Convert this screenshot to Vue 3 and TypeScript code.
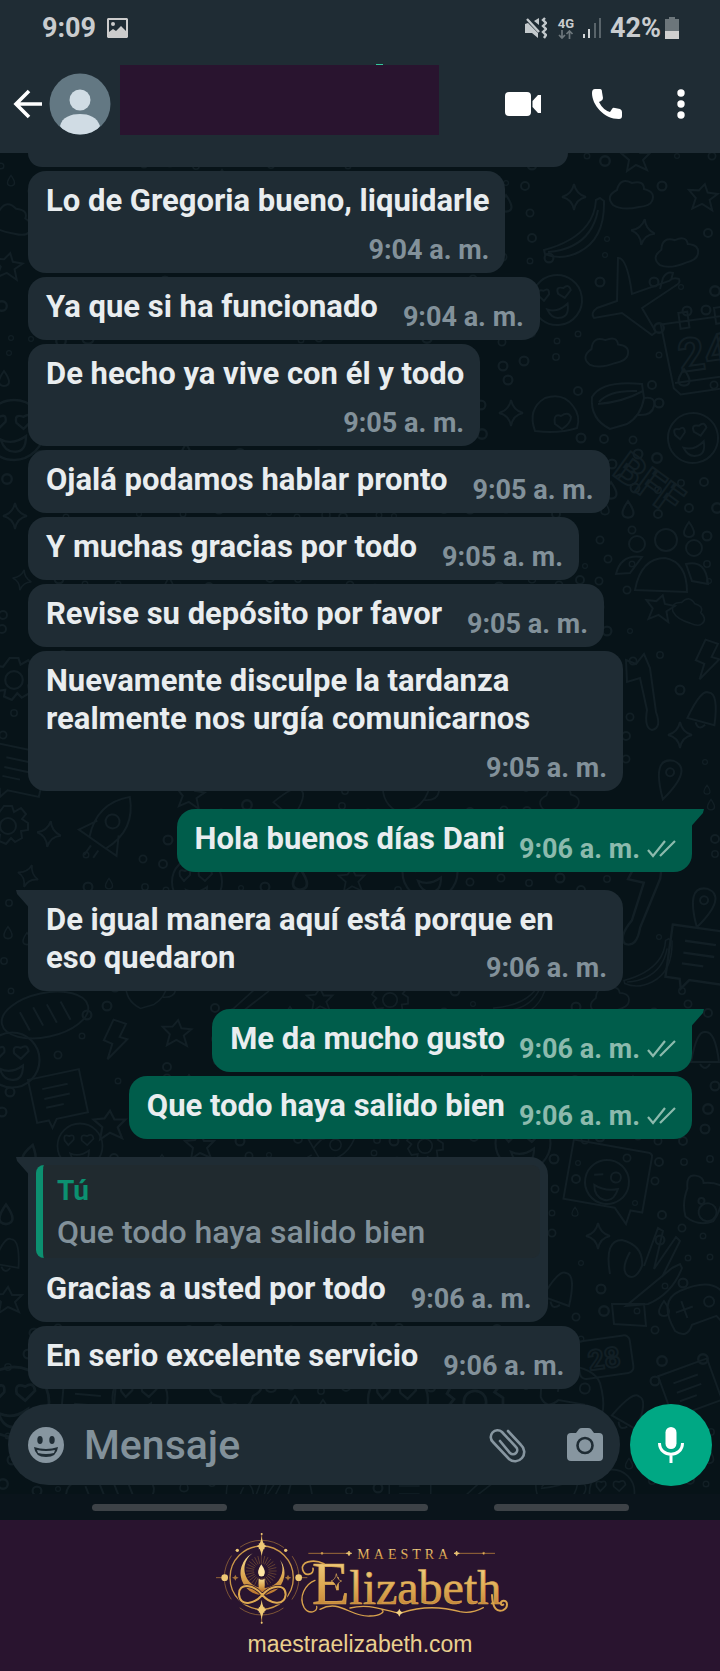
<script setup lang="ts">
import { ref } from 'vue'

type Mode = 'inline' | 'stacked' | 'wrapped'

interface Message {
  id: number
  text: string
  time: string
  mode: Mode
  out?: boolean
  first?: boolean
  quote?: { author: string; text: string }
}

const messages: Message[] = [
  { id: 1, text: 'Lo de Gregoria bueno, liquidarle', time: '9:04 a. m.', mode: 'stacked' },
  { id: 2, text: 'Ya que si ha funcionado', time: '9:04 a. m.', mode: 'inline' },
  { id: 3, text: 'De hecho ya vive con él y todo', time: '9:05 a. m.', mode: 'stacked' },
  { id: 4, text: 'Ojalá podamos hablar pronto', time: '9:05 a. m.', mode: 'inline' },
  { id: 5, text: 'Y muchas gracias por todo', time: '9:05 a. m.', mode: 'inline' },
  { id: 6, text: 'Revise su depósito por favor', time: '9:05 a. m.', mode: 'inline' },
  { id: 7, text: 'Nuevamente disculpe la tardanza realmente nos urgía comunicarnos', time: '9:05 a. m.', mode: 'stacked' },
  { id: 8, text: 'Hola buenos días Dani', time: '9:06 a. m.', mode: 'inline', out: true, first: true },
  { id: 9, text: 'De igual manera aquí está porque en eso quedaron', time: '9:06 a. m.', mode: 'wrapped', first: true },
  { id: 10, text: 'Me da mucho gusto', time: '9:06 a. m.', mode: 'inline', out: true, first: true },
  { id: 11, text: 'Que todo haya salido bien', time: '9:06 a. m.', mode: 'inline', out: true },
  {
    id: 12,
    text: 'Gracias a usted por todo',
    time: '9:06 a. m.',
    mode: 'inline',
    first: true,
    quote: { author: 'Tú', text: 'Que todo haya salido bien' },
  },
  { id: 13, text: 'En serio excelente servicio', time: '9:06 a. m.', mode: 'inline' },
]

const draft = ref('')

type Doodle = [shape: string, x: number, y: number, scale: number, turn: number]

const doodles: Doodle[] = [
  ['cloud', 632, 195, 1, 0], ['cloud', 677, 252, 1, -10], ['cloud', 607, 352, 1, -8], ['cloud', 12, 220, 1, 20],
  ['banana', 574, 232, 1, 0], ['plane', 628, 300, 1, 0], ['smile', 557, 300, 1, -8], ['calendar', 702, 352, 1, -8],
  ['cup', 622, 406, 1, 0], ['smile', 693, 438, 1, -10], ['cookie', 557, 414, 1, 0], ['people', 666, 560, 1, 0],
  ['spark', 574, 197, 1, 0], ['spark', 643, 232, 1, 8], ['spark', 511, 413, 1, 0], ['star', 703, 197, 1, 8],
  ['star', 636, 158, 1, 0], ['star', 660, 608, 1, 12], ['spark', 15, 516, 1, 0], ['spark', 22, 580, 0.8, 12],
  ['star', 8, 266, 1, 10], ['smile', 14, 430, 1.2, 0], ['gear', 14, 680, 1.1, 0], ['note', 18, 770, 1, 12],
  ['bone', 648, 690, 1, 0], ['spark', 680, 735, 1, 0], ['bolt', 706, 660, 1, 10], ['pin', 668, 780, 1, 15],
  ['bell', 704, 710, 1, 15], ['cloud', 690, 612, 0.8, 30], ['gear', 8, 826, 1, 0], ['spark', 49, 834, 1, 8],
  ['rocket', 108, 828, 1, 35], ['star', 190, 795, 1, 10], ['bell', 290, 802, 0.9, 40], ['cup', 410, 792, 0.9, 0],
  ['cloud', 560, 800, 0.9, 0], ['spark', 28, 876, 0.9, 20], ['smile', 197, 882, 1, 0], ['drop', 300, 880, 1.4, 0],
  ['star', 352, 880, 0.9, 0], ['smile', 430, 872, 1.1, 0], ['pin', 702, 908, 1, 15], ['bone', 645, 900, 1.2, 30],
  ['banana', 648, 966, 0.8, 0], ['note', 700, 955, 1.2, 8], ['bread', 45, 1015, 1, -12], ['bolt', 114, 1040, 1, 10],
  ['star', 177, 1033, 1, 5], ['note', 58, 1096, 1, -12], ['smile', 12, 1060, 1.1, 0], ['drop', 30, 1155, 1.3, 15],
  ['star', 110, 1125, 1.1, 0], ['cup', 150, 990, 0.8, 0], ['bone', 250, 1000, 0.9, 60], ['star', 320, 1000, 0.9, 0],
  ['gear', 390, 1000, 0.9, 0], ['banana', 520, 998, 0.8, 10], ['cloud', 610, 1000, 0.9, -10], ['bell', 705, 1050, 1, 0],
  ['chat', 607, 1182, 1, 10], ['bear', 707, 1204, 1, 10], ['spark', 598, 1236, 1, 0], ['hand', 638, 1268, 1, 0],
  ['pad', 698, 1312, 1, -20], ['clock', 606, 1358, 1, -8], ['bell', 560, 1290, 1, 20], ['note', 690, 1388, 1, -20],
  ['star', 8, 1300, 1, 0], ['bell', 8, 1255, 0.9, 10], ['drop', 6, 1215, 1.3, 0], ['smile', 80, 1146, 0.9, 0],
  ['star', 200, 1146, 1, 0], ['rocket', 330, 1148, 0.8, 60], ['gear', 425, 1146, 0.9, 0], ['smile', 523, 1143, 1.1, 0],
  ['smile', 14, 1402, 1.4, 0], ['note', 88, 1405, 1, 5], ['smile', 140, 1398, 1.1, 0], ['cloud', 235, 1390, 1.2, 180],
  ['smile', 398, 1400, 1.2, 0], ['gear', 475, 1402, 1.4, 0], ['pad', 570, 1392, 1, 10], ['bell', 630, 1412, 1, 30],
  ['bread', 110, 1492, 1, -5], ['hand', 250, 1500, 0.8, 0], ['bell', 300, 1488, 0.9, 0], ['note', 410, 1494, 0.8, 0],
  ['bone', 480, 1488, 0.8, 60], ['smile', 612, 1492, 0.9, 0], ['cup', 560, 1490, 0.8, 0],
]

/* Scatter small rings, drops and dots in the spaces that the larger doodles leave free. */
function scatter(): Doodle[] {
  const out: Doodle[] = []
  let seed = 7
  const next = () => {
    seed = (seed * 16807) % 2147483647
    return seed / 2147483647
  }
  for (let y = 160; y < 1490; y += 25) {
    for (let x = 8; x < 720; x += 26) {
      const px = Math.round(x + next() * 14 - 7)
      const py = Math.round(y + next() * 14 - 7)
      const pick = next()
      const crowded = doodles.some((d) => Math.hypot(d[1] - px, d[2] - py) < 31)
      if (crowded) continue
      out.push([pick < 0.85 ? 'ring' : 'drop', px, py, 0.6 + Math.round(next() * 6) / 10, 0])
    }
  }
  return out
}

const wallpaper: Doodle[] = [...scatter(), ...doodles]
const rays = Array.from({ length: 28 }, (_, i) => (i * 360) / 28)
</script>

<template>
  <div class="page">
    <header class="top">
      <div class="status">
        <span class="clock">9:09</span>
        <svg class="pic" viewBox="0 0 21 20" aria-hidden="true">
          <path fill-rule="evenodd" d="M1 0h19l1 1v18l-1 1H1l-1-1V1zM2 2v12l4-3 3 2 5-5 5 5V2zM6 4a2 2 0 1 1 0 4a2 2 0 0 1 0-4z" />
        </svg>
        <span class="push"></span>
        <svg class="mute" viewBox="0 0 22 22" aria-hidden="true">
          <path d="M0 7l3-1L13 16v5l-6-5H0z" fill="#c3c9cc" />
          <path d="M14 1v7L9 4z" fill="#c3c9cc" />
          <path d="M2 2l12 13" stroke="#c3c9cc" stroke-width="2.400" />
          <path d="M20 1l-2 2 3 3-3 3 3 3-3 3 3 3-2 3" fill="none" stroke="#c3c9cc" stroke-width="2.400" />
        </svg>
        <span class="net">
          <span>4G</span>
          <svg viewBox="0 0 16 9" aria-hidden="true">
            <path d="M4 0v8M1 5l3 3 3-3M11.500 9V1M8.500 4l3-3 3 3" fill="none" stroke="#6d777c" stroke-width="1.700" />
          </svg>
        </span>
        <svg class="signal" viewBox="0 0 19 20" aria-hidden="true">
          <path d="M0 16h2v4H0zM5 11h2v9H5z" fill="#d3d7d9" />
          <path d="M11 5h2v15h-2zM16 0h2v20h-2z" fill="#59646a" />
        </svg>
        <span class="level">42%</span>
        <svg class="battery" viewBox="0 0 14 22" aria-hidden="true">
          <path d="M4 0h6v2h4v12H0V2h4z" fill="#6c767b" />
          <path d="M0 14h14v8H0z" fill="#d0d0d0" />
        </svg>
      </div>
      <div class="bar">
        <button class="icon back" type="button" aria-label="Atrás">
          <svg viewBox="0 0 28 28"><path d="M15 1L2 14l13 13M2 14h26" fill="none" stroke="#fff" stroke-width="3.600" /></svg>
        </button>
        <svg class="avatar" viewBox="0 0 62 62" role="img" aria-label="Contacto">
          <defs><clipPath id="face"><circle cx="31" cy="31" r="30.500" /></clipPath></defs>
          <circle cx="31" cy="31" r="30.500" fill="#637883" />
          <g clip-path="url(#face)" fill="#d0dce4">
            <circle cx="31" cy="27" r="10.500" />
            <path d="M11 53c2-9 11-12 20-12s17 3 20 12c-4 7-12 10-20 10s-16-3-20-10z" />
          </g>
        </svg>
        <div class="name"></div>
        <div class="actions">
          <button class="icon video" type="button" aria-label="Videollamada">
            <svg viewBox="0 0 36 24"><rect width="26" height="24" rx="4" fill="#fff" /><path d="M27.500 9L33 3h3v18h-3l-5.500-6z" fill="#fff" /></svg>
          </button>
          <button class="icon phone" type="button" aria-label="Llamar">
            <svg viewBox="0 0 30 30"><path d="M3 0h5q2 0 2 3l1 6q0 2-2 3l-2 1q4 8 11 10l2-3q1-2 3-1l5 1q2 1 2 3v4q0 3-3 3C12 30 0 16 0 4q0-4 3-4z" fill="#fff" /></svg>
          </button>
          <button class="icon more" type="button" aria-label="Más opciones">
            <svg viewBox="0 0 8 30"><circle cx="4" cy="4" r="3.700" /><circle cx="4" cy="15" r="3.700" /><circle cx="4" cy="26" r="3.700" /></svg>
          </button>
        </div>
      </div>
    </header>

    <main class="chat">
      <svg class="wallpaper" viewBox="0 153 720 1341" preserveAspectRatio="xMidYMin slice" aria-hidden="true">
        <defs>
          <g id="ring"><circle r="4" /></g>
          <g id="drop"><path d="M0-8q10 14 0 15q-10-1 0-15z" /></g>
          <g id="spark"><path d="M0-13q2 10 12 13q-10 2-12 13q-2-11-12-13q10-3 12-13z" /></g>
          <g id="star"><path d="M0-13l4 8 10 0-7 7 4 10-11-5-9 6 2-11-8-7 10-1z" /></g>
          <g id="cloud"><path d="M-19 10q-8-9 4-15q3-13 15-7q12-3 12 6q12 3 8 12q-2 5-13 6q-17 4-26-2z" /></g>
          <g id="banana"><path d="M26-34l4 3q1 38-25 51q-18 9-34 2l-1-4q30-8 43-25q8-10 9-25zM24-22q-5 26-26 36-10 5-24 6" /></g>
          <g id="plane"><path d="M-10-42q9-1 14 36l37-13q4-4 10-2q2 4-4 7L14 8l14 24-4 3L-6 13l-28 5q-4-5 3-10l20-7zM32-11l3-11q4-7 10-5l-2 7" /></g>
          <g id="smile"><circle r="25" /><path d="M-17-6q-2-8 5-5q6-3 5 4l-6 6zM2-6q-2-8 6-5q6-4 7 3l-7 7zM-11 8q10 5 21-3q0 14-10 13q-8 0-11-10z" /></g>
          <g id="calendar"><path d="M-37-33h80v72h-70l-6-7zM-31 27h74M-18-42h9v16h-9zM18-42h9v16h-9z" /><text x="-24" y="17" font-size="46">24</text></g>
          <g id="cup"><path d="M-30-9q10-17 50-13l2 14q-3 18-17 26l-17 5q-20-10-18-32zM-24-2q25-2 45-13M-23-4q10-12 38-11M22-8q12-2 10 8t-16 9" /></g>
          <g id="cookie"><path d="M-22 17q-8-22 10-33q18-6 28 8q8 10 4 22q-18 6-42 3zM-2 10q-2-11 6-8q7-5 10 1q0 6-9 12z" /></g>
          <g id="people"><circle cy="-20" r="11" /><circle cx="-29" cy="-16" r="8" /><circle cx="28" cy="-12" r="8" /><path d="M-31 30q6-32 30-32q22 4 22 34zM-50 14q5-20 26-17l-12 16zM20 4q20-5 22 20l-16-3z" /></g>
          <g id="gear"><circle r="8" /><path d="M-4-20h8l2 6 7-4 5 6-4 5 6 4v7l-7 1 1 7-7 4-4-4-5 6-7-3 1-6-7 1-4-7 4-5-5-4 4-7 6 1z" /></g>
          <g id="note"><path d="M-26-22h52v44h-32l-6 8-2-8h-12zM-14-10h26M-14 0h26M-14 9h18" /></g>
          <g id="bone"><path d="M-22-30l10 4 8-10 6 14 6 44q6 16-4 18q-8-2-5-20l-7-32-13 4z" /></g>
          <g id="bolt"><path d="M-4-20l13 2-4 14 8 1-16 23 2-16-9-2z" /></g>
          <g id="pin"><path d="M0 20q-22-38 0-40q22 2 0 40z" /><circle cy="-8" r="4" /></g>
          <g id="bell"><path d="M-14 12q6-32 14-30q10-2 14 30zM-5 14q5 8 10 0" /></g>
          <g id="rocket"><path d="M0-38q24 24 10 56h-20q-14-32 10-56zM-13 0l-10 18 13 0M13 0l10 18-13 0M-4 24v12M5 24v9" /><circle cy="-8" r="7" /></g>
          <g id="bread"><ellipse rx="44" ry="22" /><path d="M-24-8l6 20M-10-10l6 20M4-10l6 20M18-10l6 20" /></g>
          <g id="chat"><path d="M-40-36h76q4 0 4 4v56h-12l-2 14-14-14h-52z" /><circle r="22" /><path d="M-14-5l9-2M3-6a5 5 0 1 0 10 0a5 5 0 1 0-10 0M-12 5q12 5 24 0q-2 14-12 13q-10-1-12-13z" /></g>
          <g id="bear"><path d="M-22-12q-4-14 6-14q8 0 9 6q10-3 20 0q4 20-4 36q-14 8-28 0q-6-12-3-28z" /><circle cx="-6" cy="-2" r="3" /><circle cx="2" cy="8" r="9" /></g>
          <g id="hand"><path d="M-28 6q-6-34 12-34q22 6 20 26q-6 14-14 10q-8-6 2-24M6-2l14-38 5 3-9 38 22-32 4 4-18 36M34 0l8-4 2 4q-10 26-34 36l-22 2zM-26 36l32 0 2 22-32-2z" /></g>
          <g id="pad"><path d="M-28 10q-6-34 18-36q30-2 38 12q14 30 2 40q-8 0-14-16h-26q-10 12-18 0z" /><path d="M-12-16v18M-21-7h18" /><circle cx="14" cy="-6" r="5" /></g>
          <g id="clock"><rect x="-28" y="-20" width="54" height="38" rx="6" /><text x="-18" y="10" font-size="28">28</text></g>
        </defs>
        <g class="ink">
          <use
            v-for="(d, i) in wallpaper"
            :key="i"
            :href="'#' + d[0]"
            :transform="`translate(${d[1]} ${d[2]}) rotate(${d[4]}) scale(${d[3]})`"
          />
          <g transform="translate(611 474) rotate(36)"><text font-size="42">BFF</text></g>
        </g>
      </svg>

      <div class="thread">
        <div class="cut"></div>
        <article
          v-for="m in messages"
          :key="m.id"
          class="bubble"
          :class="[m.mode, { out: m.out, first: m.first, quoted: m.quote }]"
        >
          <blockquote v-if="m.quote" class="quote">
            <span class="author">{{ m.quote.author }}</span>
            <span>{{ m.quote.text }}</span>
          </blockquote>
          <div class="body">
            <p class="text">{{ m.text }}</p>
            <span class="meta">
              <time>{{ m.time }}</time>
              <svg v-if="m.out" class="ticks" viewBox="0 0 29 18" role="img" aria-label="Entregado">
                <path d="M1 10l5 6L18 1M13 16L28 1" fill="none" stroke="currentColor" stroke-width="2.200" />
              </svg>
            </span>
          </div>
        </article>
      </div>

      <form class="composer" @submit.prevent>
        <div class="field">
          <button class="icon emoji" type="button" aria-label="Emojis">
            <svg viewBox="0 0 36 36">
              <circle cx="18" cy="18" r="18" fill="#8796a0" />
              <ellipse cx="12" cy="13" rx="2.700" ry="4" fill="#1f2c34" />
              <ellipse cx="24" cy="13" rx="2.700" ry="4" fill="#1f2c34" />
              <path d="M6 20q12 4 24 0q-1 10-12 10T6 20z" fill="#1f2c34" />
              <path d="M9 23q9 2 18 0l-1 3q-8 2-16 0z" fill="#8796a0" />
            </svg>
          </button>
          <input v-model="draft" type="text" placeholder="Mensaje" aria-label="Mensaje" />
          <button class="icon clip" type="button" aria-label="Adjuntar">
            <svg viewBox="0 0 37 34">
              <path d="M19 3l13 14a9 9 0 0 1-12 14L4 14A6 6 0 0 1 13 4l14 15a4 4 0 0 1-6 6L11 13" fill="none" stroke="#8796a0" stroke-width="2.600" stroke-linecap="round" />
            </svg>
          </button>
          <button class="icon camera" type="button" aria-label="Cámara">
            <svg viewBox="0 0 36 33">
              <path d="M12 1q1-1 3-1h6q2 0 3 1l3 4h5q4 0 4 4v20q0 4-4 4H4q-4 0-4-4V9q0-4 4-4h5z" fill="#8796a0" />
              <circle cx="18" cy="17.500" r="7.500" fill="none" stroke="#1f2c34" stroke-width="2.600" />
            </svg>
          </button>
        </div>
        <button class="mic" type="button" aria-label="Grabar audio">
          <svg viewBox="0 0 26 36">
            <rect x="7.500" width="11" height="22" rx="5.500" fill="#fff" />
            <path d="M1.500 16c0 15 23 15 23 0M13 27v9" fill="none" stroke="#fff" stroke-width="3" />
          </svg>
        </button>
      </form>
    </main>

    <nav class="keys" aria-label="Navegación">
      <button type="button" aria-label="Recientes"></button>
      <button type="button" aria-label="Inicio"></button>
      <button type="button" aria-label="Volver"></button>
    </nav>

    <footer class="brand">
      <svg class="logo" viewBox="30 51 900 282" role="img" aria-label="Maestra Elizabeth">
        <defs>
          <linearGradient id="gold" x1="0" y1="0" x2="0" y2="1">
            <stop offset="0" stop-color="#f6dc92" />
            <stop offset="0.550" stop-color="#dca750" />
            <stop offset="1" stop-color="#b8732c" />
          </linearGradient>
          <path id="glint" d="M0-30Q3-4 15 0Q3 4 0 30Q-3 4-15 0Q-3-4 0-30zM-9-9Q0-4 9-9Q4 0 9 9Q0 4-9 9Q-4 0-9-9z" />
        </defs>
        <g fill="none" stroke="#a8753a">
          <circle cx="185" cy="188" r="112" stroke-width="2" stroke-dasharray="140 36" stroke-dashoffset="70" />
          <circle cx="185" cy="188" r="95" stroke="#cc9849" stroke-width="4" />
          <path d="M48 188h36M286 188h36M185 54v50M185 272v54" stroke-width="2.500" />
        </g>
        <g stroke="#8f6336" stroke-width="1.500">
          <path v-for="r in rays" :key="r" d="M0-22V-46" :transform="`translate(184 168) rotate(${r})`" />
        </g>
        <path d="M158 115A66 66 0 1 0 240 134A57 57 0 1 1 158 115z" fill="url(#gold)" />
        <path d="M184 148q16 23 8 33q-8 7-15 0q-8-10 7-33z" fill="#ffe6a5" />
        <path d="M176 191q9 6 18 0v38h-18z" fill="url(#gold)" />
        <path d="M187 240C160 207 116 202 117 238C120 278 164 266 187 240C211 213 257 202 257 239C253 276 209 266 187 240z" fill="none" stroke="#29142f" stroke-width="11" />
        <path d="M187 240C160 207 116 202 117 238C120 278 164 266 187 240C211 213 257 202 257 239C253 276 209 266 187 240z" fill="none" stroke="#dda951" stroke-width="6" />
        <g fill="#eec875">
          <use href="#glint" x="185" y="94" />
          <use href="#glint" x="185" y="284" />
          <circle cx="74" cy="188" r="10" /><circle cx="296" cy="188" r="10" />
          <circle cx="112" cy="106" r="5" /><circle cx="257" cy="106" r="5" />
          <circle cx="185" cy="57" r="3" /><circle cx="185" cy="323" r="3" />
          <path d="M106 179l3 6 7 3-7 3-3 6-3-6-7-3 7-3zM264 179l3 6 7 3-7 3-3 6-3-6-7-3 7-3z" fill="#a8753a" />
        </g>
        <g stroke="#b27c3b" stroke-width="2.500" fill="#eec875">
          <path d="M325 115h120M770 115h115" />
          <circle cx="366" cy="115" r="3" /><circle cx="851" cy="115" r="3" />
          <path d="M447 108l2 5 6 2-6 2-2 5-2-5-6-2 6-2zM770 108l2 5 6 2-6 2-2 5-2-5-6-2 6-2z" stroke="#eec875" />
        </g>
        <text class="small" x="472" y="131">MAESTRA</text>
        <text class="big" x="336" y="267">E</text>
        <text class="rest" x="448" y="266">lizabeth</text>
        <g fill="none" stroke="#d9a34d" stroke-width="5" stroke-linecap="round">
          <path d="M372 146C338 130 300 142 308 164C315 187 344 178 339 160" />
          <path d="M345 196C316 207 295 246 312 277C326 300 355 291 350 274" stroke-width="4" />
          <path d="M360 283C420 251 450 307 510 303C542 303 556 289 546 285M450 279C505 265 545 284 592 293M606 293C680 268 740 279 780 290Q815 297 850 278" stroke-width="4" />
          <path d="M876 240C878 283 892 291 908 286C926 279 924 256 910 257C898 260 902 273 910 269" stroke-width="6" />
        </g>
        <path d="M409 176q3 19 16 22q-13 4-16 22q-3-18-16-22q13-3 16-22z" fill="#29142f" stroke="#e0ae59" stroke-width="2" />
        <path d="M598 281q2 9 11 12q-9 3-11 12q-2-9-11-12q9-3 11-12z" fill="#f3d486" />
      </svg>
      <a href="#">maestraelizabeth.com</a>
    </footer>
  </div>
</template>

<style>
html,
body {
  background: #29142f;
}
</style>

<style scoped>
.page {
  font-family: Roboto, 'Liberation Sans', sans-serif;
  font-weight: 500;
  color: #e9edef;
}
button {
  margin: 0;
  padding: 0;
  border: 0;
  background: none;
}
.icon {
  display: block;
  flex: none;
}
svg {
  display: block;
  flex: none;
}
.icon svg {
  width: 100%;
  height: 100%;
  overflow: visible;
}
.top {
  background: #1f2c34;
}
.status {
  display: flex;
  align-items: center;
  height: 54px;
  padding: 2px 41px 0 42px;
  box-sizing: border-box;
  color: #c9cccf;
  font-size: 27px;
  font-weight: 700;
  line-height: 52px;
}
.pic {
  width: 21px;
  height: 20px;
  margin-left: 11px;
  fill: #cccccc;
}
.push {
  flex: 1;
}
.mute {
  width: 22px;
  height: 22px;
}
.net {
  margin: 0 9px 0 11px;
  font-size: 13px;
  line-height: 13px;
}
.net svg {
  width: 16px;
  height: 9px;
}
.signal {
  width: 19px;
  height: 20px;
  margin-right: 8px;
}
.battery {
  width: 14px;
  height: 22px;
  margin-left: 4px;
}
.bar {
  display: flex;
  align-items: center;
  height: 99px;
  padding: 0 35px 0 14px;
}
.back {
  width: 28px;
  height: 28px;
}
.avatar {
  width: 62px;
  height: 62px;
  margin: 0 9px 0 7px;
}
.name {
  position: relative;
  flex: 0 1 319px;
  align-self: flex-start;
  height: 70px;
  margin-top: 11px;
  background: #29142f;
}
.name::before {
  content: '';
  position: absolute;
  top: -1px;
  left: 256px;
  width: 7px;
  height: 1px;
  background: #35c79c;
}
.actions {
  display: flex;
  align-items: center;
  margin-left: auto;
}
.video {
  width: 36px;
  height: 24px;
  margin-right: 51px;
}
.phone {
  width: 30px;
  height: 30px;
  margin-right: 55px;
}
.more {
  width: 8px;
  height: 30px;
  fill: #fff;
}
.chat {
  position: relative;
  overflow: hidden;
  background: #071318;
}
.wallpaper {
  position: absolute;
  inset: 0;
  width: 100%;
  height: 100%;
}
.ink {
  fill: none;
  stroke: #121f25;
  stroke-width: 2;
  font-family: Roboto, sans-serif;
  font-weight: 700;
}
.thread {
  position: relative;
  display: flex;
  flex-direction: column;
  align-items: flex-start;
  gap: 4px;
  padding: 0 28px 15px;
}
.cut {
  width: 540px;
  max-width: 100%;
  height: 14px;
  border-radius: 0 0 18px 18px;
  background: #1f2c34;
}
.bubble {
  position: relative;
  box-sizing: border-box;
  max-width: 595px;
  padding: 11px 16px 7px 18px;
  border-radius: 18px;
  background: #1f2c34;
}
.out {
  align-self: flex-end;
  background: #005d4b;
}
.first {
  margin-top: 14px;
  border-top-left-radius: 0;
}
.first.out {
  border-radius: 18px 0 18px 18px;
}
.first::before {
  content: '';
  position: absolute;
  top: 0;
  left: -12px;
  width: 13px;
  height: 20px;
  background: inherit;
  clip-path: polygon(0 0, 100% 0, 100% 100%, 90% 80%, 8% 20%);
}
.first.out::before {
  left: auto;
  right: -12px;
  clip-path: polygon(100% 0, 0 0, 0 100%, 10% 80%, 92% 20%);
}
.body {
  display: flex;
  align-items: flex-end;
  justify-content: space-between;
  gap: 25px;
}
.out .body {
  gap: 14px;
}
.stacked .body {
  flex-direction: column;
  gap: 7px;
}
.stacked .text {
  align-self: flex-start;
}
.wrapped .body {
  display: flow-root;
}
.text {
  margin: 0 0 7px;
  font-size: 31px;
  font-weight: 700;
  line-height: 38px;
}
.meta {
  display: flex;
  align-items: center;
  gap: 7px;
  flex: none;
  color: #82919a;
  font-size: 27px;
  font-weight: 700;
  line-height: 32px;
}
.wrapped .text {
  display: inline;
}
.wrapped .meta {
  float: right;
  margin-top: 13px;
}
.out .meta {
  color: #8cbaad;
}
.ticks {
  width: 29px;
  height: 18px;
}
.quoted {
  padding-top: 8px;
}
.quote {
  display: flex;
  flex-direction: column;
  margin: 0 -8px 12px -10px;
  padding: 10px 14px 7px;
  border-left: 7px solid #0c9070;
  border-radius: 8px;
  background: #202a2f;
  color: #82919a;
  font-size: 32px;
  line-height: 38px;
}
.author {
  margin-bottom: 6px;
  color: #0c9070;
  font-size: 28px;
  font-weight: 700;
  line-height: 32px;
}
.composer {
  position: relative;
  display: flex;
  gap: 10px;
  padding: 0 8px 8px;
}
.field {
  display: flex;
  flex: 1;
  align-items: center;
  box-sizing: border-box;
  min-width: 0;
  height: 81px;
  padding: 0 17px 0 20px;
  border-radius: 41px;
  background: #1f2c34;
}
.field input {
  flex: 1;
  min-width: 0;
  margin: 0 20px;
  padding: 0;
  border: 0;
  outline: 0;
  background: none;
  color: #e9edef;
  font: inherit;
  font-size: 41px;
  line-height: 48px;
}
.field input::placeholder {
  color: #82919a;
  opacity: 1;
}
.emoji {
  width: 36px;
  height: 36px;
}
.clip {
  width: 37px;
  height: 34px;
  margin-right: 41px;
}
.camera {
  width: 36px;
  height: 33px;
}
.mic {
  display: flex;
  flex: none;
  align-items: center;
  justify-content: center;
  width: 82px;
  height: 82px;
  border-radius: 50%;
  background: #00a884;
}
.mic svg {
  width: 26px;
  height: 36px;
}
.keys {
  display: flex;
  align-items: center;
  justify-content: center;
  gap: 66px;
  height: 26px;
  background: #0a141b;
}
.keys button {
  width: 135px;
  height: 7px;
  border-radius: 4px;
  background: #3d4247;
}
.brand {
  display: flex;
  flex-direction: column;
  align-items: center;
  gap: 4px;
  padding: 12px 0 13px;
  background: #29142f;
}
.logo {
  width: 300px;
  height: 94px;
}
.logo text {
  fill: url(#gold);
  font-family: 'Liberation Serif', serif;
  font-weight: 400;
}
.small {
  font-size: 42px;
  letter-spacing: 12px;
}
.big {
  font-size: 184px;
  stroke: #dca750;
  stroke-width: 2px;
}
.rest {
  font-size: 144px;
  stroke: #dca750;
  stroke-width: 2px;
}
.brand a {
  color: #ead08e;
  font-family: 'Liberation Sans', Arial, sans-serif;
  font-size: 23px;
  font-weight: 400;
  line-height: 28px;
  text-decoration: none;
}
</style>
